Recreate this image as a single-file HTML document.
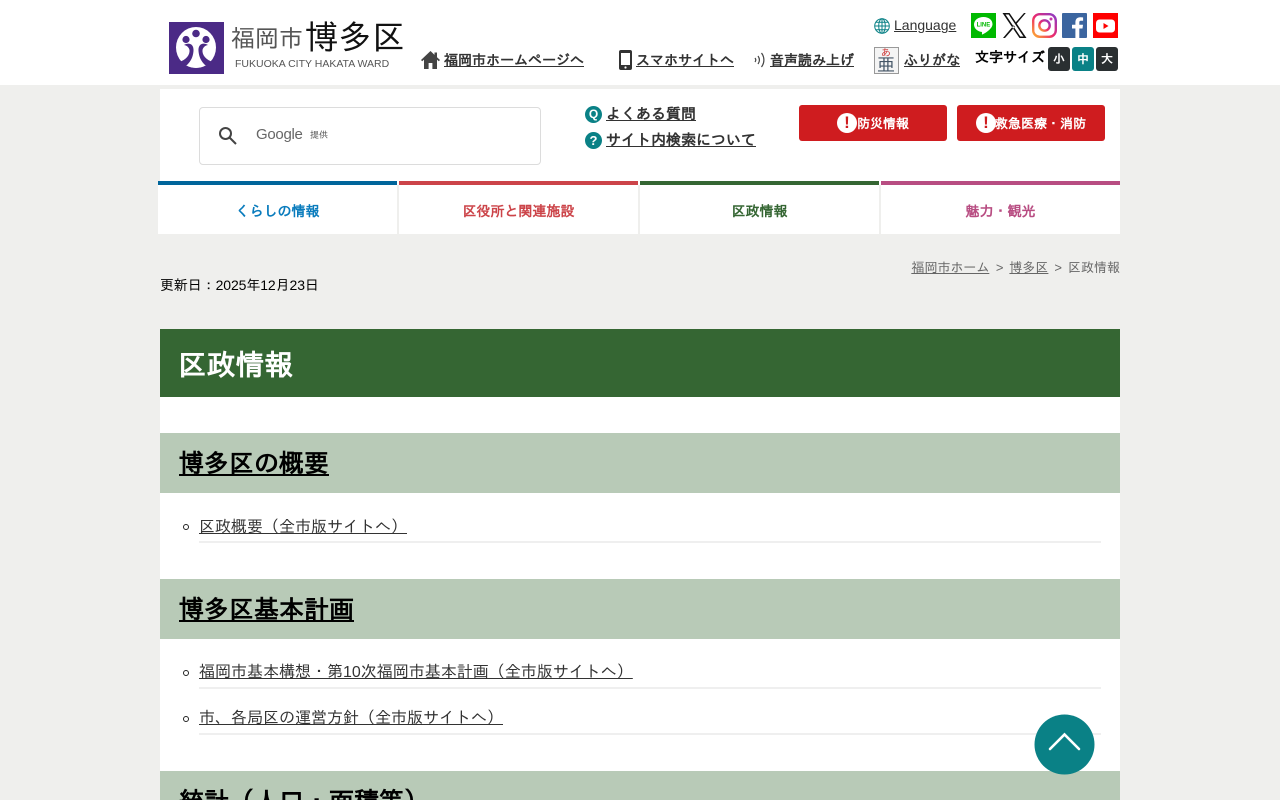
<!DOCTYPE html>
<html lang="ja"><head><meta charset="utf-8"><title>区政情報</title>
<style>
html,body{margin:0;padding:0;width:1280px;height:800px;overflow:hidden;background:#efefed;font-family:"Liberation Sans","IPAGothic",sans-serif;color:#333}
.a{position:absolute}
.t{position:absolute;white-space:nowrap;line-height:20px;color:#333}
.b{font-weight:bold}
.ln{position:absolute;left:199px;width:902px;height:2px;background:#efefef}
.h2{position:absolute;left:160px;width:960px;height:60px;background:#b8cab7}
.h2 u,.h2 span{position:absolute;left:19px;top:13px;font-size:25px;font-weight:bold;line-height:36px;color:#000;white-space:nowrap}
.dot{position:absolute;left:183px;width:4px;height:4px;border:1px solid #222;border-radius:50%}
.nav{position:absolute;top:181px;height:53px;background:#fff;text-align:center;font-weight:bold;font-size:14px;line-height:53px;border-top:4px solid;box-sizing:border-box}
.red{position:absolute;top:105px;width:148px;height:36px;background:#cf1c1f;border-radius:3px}
.ex{position:absolute;top:8px;width:20px;height:20px;border-radius:50%;background:#fff;color:#cf1c1f;font-weight:bold;font-size:17px;line-height:20px;text-align:center}
.size{position:absolute;top:47px;width:22px;height:24px;border-radius:3px;background:#2a2f31;color:#fff;font-size:12px;font-weight:bold;text-align:center;line-height:24px}
.sep{position:absolute;top:185px;width:2px;height:49px;background:#efefed}
</style></head><body>
<div class="a" style="left:0;top:0;width:1280px;height:85px;background:#fff"></div>
<div class="a" style="left:160px;top:89px;width:960px;height:145px;background:#fff"></div>

<svg class="a" style="left:169px;top:22px" width="55" height="52" viewBox="0 0 55 52"><rect width="55" height="52" fill="#4b2a86"/><ellipse cx="27" cy="25.500" rx="20" ry="20.500" fill="#fff"/><circle cx="27" cy="11.500" r="3.800" fill="#4b2a86"/><circle cx="17" cy="17.500" r="3.600" fill="#4b2a86"/><circle cx="37" cy="17.500" r="3.600" fill="#4b2a86"/><path d="M15 23C20 20 25 22 24.500 29C24 35 22 39 18 43C15 44 11 43 10 40C17 38 21 33 20.500 28C20 25.500 18 23.500 15 23Z" fill="#4b2a86"/><path d="M39 23C34 20 29 22 29.500 29C30 35 32 39 36 43C39 44 43 43 44 40C37 38 33 33 33.500 28C34 25.500 36 23.500 39 23Z" fill="#4b2a86"/><path d="M18 43.500C22 41 25 36 27 33C29 36 32 41 36 43.500C31 46.500 23 46.500 18 43.500Z" fill="#fff"/></svg>
<div class="t" style="left:231px;top:27px;font-size:24px;line-height:26px;color:#555">福岡市</div>
<div class="t" style="left:305px;top:21px;font-size:33.500px;line-height:36px;color:#111">博多区</div>
<div class="t" style="left:235px;top:58px;font-size:10.500px;line-height:12px;color:#555">FUKUOKA CITY HAKATA WARD</div>

<svg class="a" style="left:421px;top:51px" width="19" height="18" viewBox="0 0 19 18"><path d="M9.500 0 0 9l1.200 1.300L3 8.600V18h4.600v-6h3.800v6H16V8.600l1.800 1.700L19 9l-3-2.800V1.500h-2.500v2.400z" fill="#444"/></svg>
<div class="t b" style="left:444px;top:50px;font-size:14px"><u>福岡市ホームページへ</u></div>
<svg class="a" style="left:619px;top:50px" width="13" height="20" viewBox="0 0 13 20"><rect width="13" height="20" rx="2" fill="#333"/><rect x="2" y="3" width="9" height="12" fill="#fff"/><circle cx="6.500" cy="17.500" r="1.100" fill="#fff"/></svg>
<div class="t b" style="left:636px;top:50px;font-size:14px"><u>スマホサイトへ</u></div>
<svg class="a" style="left:753px;top:51px" width="13" height="18" viewBox="0 0 13 18" fill="none" stroke="#444" stroke-width="1.200"><path d="M2 7c1 1.300 1 2.700 0 4M5 5c1.800 2.500 1.800 5.500 0 8M8.500 2c3.200 4.300 3.200 9.700 0 14"/></svg>
<div class="t b" style="left:770px;top:50px;font-size:14px"><u>音声読み上げ</u></div>
<div class="a" style="left:874px;top:47px;width:23px;height:25px;border:1px solid #999;background:#f4f4f4"></div>
<div class="t" style="left:881px;top:48px;font-size:10px;line-height:12px;color:#c33">あ</div>
<div class="t" style="left:877px;top:57px;font-size:18px;line-height:16px;color:#456">亜</div>
<div class="t b" style="left:904px;top:50px;font-size:14px"><u>ふりがな</u></div>
<svg class="a" style="left:874px;top:18px" width="16" height="16" viewBox="0 0 16 16" fill="none" stroke="#0a8186" stroke-width="1"><circle cx="8" cy="8" r="7.300"/><ellipse cx="8" cy="8" rx="3.300" ry="7.300"/><path d="M8 .7v14.600M.7 8h14.600M1.800 4.300h12.400M1.800 11.700h12.400"/></svg>
<div class="t" style="left:894px;top:15px;font-size:14px"><u>Language</u></div>

<svg class="a" style="left:971px;top:13px" width="25" height="25" viewBox="0 0 25 25"><rect width="25" height="25" fill="#00b900"/><path d="M12.500 4C7 4 3 7.300 3 11.500c0 3.800 3.200 6.800 7.500 7.400.8.200.6 1.100.4 2.100 0 .5.400.6 1 .3 2-1.100 9.100-5 9.600-9.800C21.700 7.300 18 4 12.500 4z" fill="#fff"/><text x="12.400" y="13.500" font-size="6" font-weight="bold" fill="#00b900" text-anchor="middle" font-family="Liberation Sans">LINE</text></svg>
<svg class="a" style="left:1002px;top:13px" width="25" height="25" viewBox="0 0 25 25"><path d="M.5 0h7l17 25h-7zM3.500 1.500l14.800 22h3.200L6.700 1.500zM22 0h1.800L14 11.500l-1-1.300zM1 25h2l9.800-11.300-1-1.400z" fill="#111"/></svg>
<svg class="a" style="left:1032px;top:13px" width="25" height="25" viewBox="0 0 25 25"><defs><linearGradient id="ig" x1="0" y1="1" x2="1" y2="0"><stop offset="0" stop-color="#fdb02f"/><stop offset=".45" stop-color="#ee2a6b"/><stop offset="1" stop-color="#8a3ac8"/></linearGradient></defs><rect x="1.200" y="1.200" width="22.600" height="22.600" rx="6.500" fill="none" stroke="url(#ig)" stroke-width="2.400"/><circle cx="12.500" cy="12.500" r="5.200" fill="none" stroke="url(#ig)" stroke-width="2.400"/><circle cx="19" cy="6" r="1.500" fill="#c837ab"/></svg>
<svg class="a" style="left:1062px;top:13px" width="25" height="25" viewBox="0 0 25 25"><rect width="25" height="25" rx="1" fill="#3b659f"/><path d="M17.300 25v-9.500h3.200l.5-3.700h-3.700V9.500c0-1.100.3-1.800 1.800-1.800h2V4.400c-.4 0-1.500-.2-2.900-.2-2.900 0-4.800 1.700-4.800 5v2.600H10v3.700h3.400V25z" fill="#fff"/></svg>
<svg class="a" style="left:1093px;top:13px" width="25" height="25" viewBox="0 0 25 25"><rect width="25" height="25" fill="#f00"/><rect x="3" y="6.500" width="19" height="13" rx="3.500" fill="#fff"/><path d="M10.500 10v6l5-3z" fill="#f00"/></svg>

<div class="t b" style="left:975px;top:47px;font-size:14px;color:#000">文字サイズ</div>
<div class="size" style="left:1048px">小</div>
<div class="size" style="left:1072px;background:#0a8186">中</div>
<div class="size" style="left:1096px">大</div>

<div class="a" style="left:199px;top:107px;width:340px;height:56px;border:1px solid #dcdcdc;border-radius:4px;background:#fff"></div>
<svg class="a" style="left:218px;top:126px" width="20" height="20" viewBox="0 0 20 20" fill="none" stroke="#444" stroke-width="2"><circle cx="7.500" cy="7.500" r="5.500"/><path d="M11.500 11.500l6.500 6.500"/></svg>
<div class="t" style="left:256px;top:125px;font-size:15px;letter-spacing:-.3px;color:#666">Google</div>
<div class="t" style="left:310px;top:125px;font-size:9px;color:#555">提供</div>

<div class="a" style="left:585px;top:106px;width:17px;height:17px;border-radius:50%;background:#0a8186;color:#fff;font-size:12px;font-weight:bold;line-height:17px;text-align:center">Q</div>
<div class="t b" style="left:606px;top:105px;font-size:15px"><u>よくある質問</u></div>
<div class="a" style="left:585px;top:132px;width:17px;height:17px;border-radius:50%;background:#0a8186;color:#fff;font-size:13px;font-weight:bold;line-height:17px;text-align:center">?</div>
<div class="t b" style="left:606px;top:131px;font-size:15px"><u>サイト内検索について</u></div>

<div class="red" style="left:799px"><div class="ex" style="left:38px">!</div><div class="t b" style="left:58px;top:9px;font-size:13px;line-height:20px;color:#fff">防災情報</div></div>
<div class="red" style="left:957px"><div class="ex" style="left:19px">!</div><div class="t b" style="left:38px;top:9px;font-size:13px;line-height:20px;color:#fff">救急医療・消防</div></div>

<div class="nav" style="left:158px;width:239px;border-color:#00659b;color:#0a7cbd">くらしの情報</div>
<div class="nav" style="left:399px;width:239px;border-color:#cc4449;color:#cc4449">区役所と関連施設</div>
<div class="nav" style="left:640px;width:239px;border-color:#356633;color:#356633">区政情報</div>
<div class="nav" style="left:881px;width:239px;border-color:#b84d82;color:#b84d82">魅力・観光</div>
<div class="sep" style="left:397px"></div><div class="sep" style="left:638px"></div><div class="sep" style="left:879px"></div>

<div class="t" style="right:160px;top:258px;font-size:13px;color:#666"><u>福岡市ホーム</u><span style="margin:0 6px 0 6.500px">&gt;</span><u>博多区</u><span style="margin:0 6px">&gt;</span>区政情報</div>
<div class="t" style="left:160px;top:275px;font-size:14px;letter-spacing:-.1px;color:#000">更新日：2025年12月23日</div>

<div class="a" style="left:160px;top:329px;width:960px;height:471px;background:#fff"></div>
<div class="a" style="left:160px;top:329px;width:960px;height:68px;background:#356633"></div>
<div class="t b" style="left:178px;top:347px;font-size:28.800px;line-height:38px;color:#fff">区政情報</div>

<div class="h2" style="top:433px"><u>博多区の概要</u></div>
<div class="dot" style="top:524px"></div>
<div class="t" style="left:199px;top:518px;font-size:16px"><u>区政概要（全市版サイトへ）</u></div>
<div class="ln" style="top:541px"></div>

<div class="h2" style="top:579px"><u>博多区基本計画</u></div>
<div class="dot" style="top:670px"></div>
<div class="t" style="left:199px;top:663px;font-size:16px"><u>福岡市基本構想・第10次福岡市基本計画（全市版サイトへ）</u></div>
<div class="ln" style="top:687px"></div>
<div class="dot" style="top:716px"></div>
<div class="t" style="left:199px;top:709px;font-size:16px"><u>市、各局区の運営方針（全市版サイトへ）</u></div>
<div class="ln" style="top:733px"></div>

<div class="h2" style="top:771px;height:29px;overflow:hidden"><span style="top:13px;left:19px">統計（人口・面積等）</span></div>

<svg class="a" style="left:1034px;top:714px" width="61" height="61" viewBox="0 0 61 61"><circle cx="30.500" cy="30.500" r="30" fill="#0a8186"/><path d="M16 35 30.500 20.500 45 35" fill="none" stroke="#fff" stroke-width="2.600" stroke-linecap="round"/></svg>
</body></html>
